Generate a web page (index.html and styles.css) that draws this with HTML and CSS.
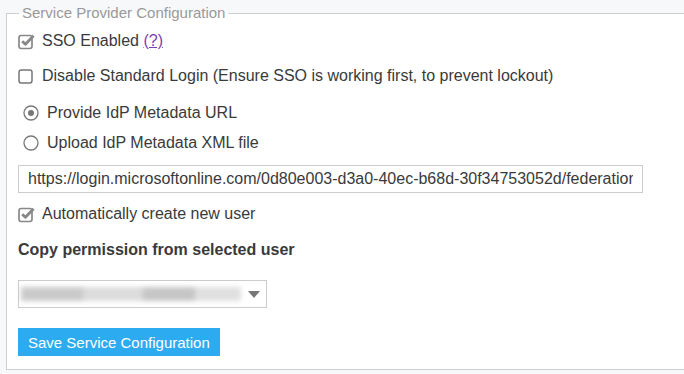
FILE: index.html
```html
<!DOCTYPE html>
<html lang="en">
<head>
    <meta charset="UTF-8">
    <title>Service Provider Configuration</title>
    <link rel="stylesheet" href="styles.css">
</head>
<body>
    <fieldset class="sp-config">
        <legend>Service Provider Configuration</legend>

        <label class="row row-sso">
            <svg class="check-icon" viewBox="0 0 17 17" width="17" height="17">
                <rect x="1" y="2.5" width="13" height="13" rx="2.2" fill="none" stroke="#888" stroke-width="1.7"/>
                <path d="M4.2 8.2 L7.4 11.3 L15.6 2.8" fill="none" stroke="#888" stroke-width="2.8" stroke-linejoin="round"/>
            </svg>
            <span>SSO Enabled <a href="#" class="help">(?)</a></span>
        </label>

        <label class="row row-disable">
            <svg class="check-icon" viewBox="0 0 17 17" width="17" height="17">
                <rect x="1" y="2" width="13" height="13" rx="2.2" fill="none" stroke="#777" stroke-width="1.5"/>
            </svg>
            <span>Disable Standard Login (Ensure SSO is working first, to prevent lockout)</span>
        </label>

        <label class="row radio row-url">
            <svg class="radio-icon" viewBox="0 0 16 16" width="16" height="16">
                <circle cx="8" cy="8" r="7" fill="none" stroke="#777" stroke-width="1.3"/>
                <circle cx="8" cy="8" r="3" fill="#777"/>
            </svg>
            <span>Provide IdP Metadata URL</span>
        </label>

        <label class="row radio row-upload">
            <svg class="radio-icon" viewBox="0 0 16 16" width="16" height="16">
                <circle cx="8" cy="8" r="7" fill="none" stroke="#777" stroke-width="1.3"/>
            </svg>
            <span>Upload IdP Metadata XML file</span>
        </label>

        <input class="url-box" type="text" readonly value="https://login.microsoftonline.com/0d80e003-d3a0-40ec-b68d-30f34753052d/federationmetadata/2007-06/federationmetadata.xml">

        <label class="row row-auto">
            <svg class="check-icon" viewBox="0 0 17 17" width="17" height="17">
                <rect x="1" y="2.5" width="13" height="13" rx="2.2" fill="none" stroke="#888" stroke-width="1.7"/>
                <path d="M4.2 8.2 L7.4 11.3 L15.6 2.8" fill="none" stroke="#888" stroke-width="2.8" stroke-linejoin="round"/>
            </svg>
            <span>Automatically create new user</span>
        </label>

        <div class="copy-label">Copy permission from selected user</div>

        <div class="user-select">
            <div class="blurred">
                <span class="blur-a"></span>
                <span class="blur-b"></span>
                <span class="blur-c"></span>
                <span class="blur-d"></span>
            </div>
            <span class="caret"></span>
        </div>

        <button class="save-btn">Save Service Configuration</button>
    </fieldset>
</body>
</html>
```

FILE: styles.css
```css
* {
    box-sizing: border-box;
}

html, body {
    margin: 0;
    padding: 0;
    overflow: hidden;
}

body {
    background: #f7f8fa;
    font-family: 'Liberation Sans', Arial, sans-serif;
    font-size: 16px;
    color: #3a3a3a;
    height: 374px;
}

.sp-config {
    margin: 4px 0 0 6px;
    width: 678px;
    padding: 9px 0 13px 11px;
    border: 1px solid #cfcfcf;
    border-right: none;
    background: #fff;
    min-width: 0;
}

.sp-config legend {
    padding: 0 3px;
    margin-left: 1px;
    color: #999;
    font-size: 15px;
    line-height: 18px;
    background: linear-gradient(to bottom, #f7f8fa 50%, #fff 50%);
}

.row {
    display: flex;
    align-items: center;
    height: 20px;
    line-height: 20px;
    gap: 7px;
}

.check-icon {
    flex: none;
}

.radio {
    padding-left: 5px;
    gap: 8px;
}

.row-disable { margin-top: 15px; }
.row-url { margin-top: 17px; }
.row-upload { margin-top: 10px; }

.help {
    color: #7b3fb0;
    text-decoration: underline;
}

.url-box {
    display: block;
    margin-top: 12px;
    width: 625px;
    height: 28px;
    border: 1px solid #ccc;
    padding: 0 9px;
    font-family: 'Liberation Sans', Arial, sans-serif;
    font-size: 16px;
    color: #3a3a3a;
    outline: none;
}

.row-auto { margin-top: 11px; }

.copy-label {
    margin-top: 16px;
    height: 20px;
    line-height: 20px;
    font-weight: bold;
}

.user-select {
    margin-top: 20px;
    width: 249px;
    height: 28px;
    border: 1px solid #ccc;
    display: flex;
    align-items: center;
    padding: 0 6px 0 2px;
}

.blurred {
    display: flex;
    width: 220px;
    height: 14px;
    filter: blur(2.5px);
}

.blurred span {
    height: 14px;
}

.blur-a { width: 62px; background: #cacaca; }
.blur-b { width: 60px; background: #dcdcdc; }
.blur-c { width: 52px; background: #c6c6c6; }
.blur-d { width: 46px; background: #e0e0e0; }

.caret {
    margin-left: auto;
    width: 0;
    height: 0;
    border-left: 6px solid transparent;
    border-right: 6px solid transparent;
    border-top: 7px solid #777;
}

.save-btn {
    display: block;
    margin-top: 20px;
    height: 28px;
    padding: 0 10px;
    border: none;
    background: #2dabf0;
    color: #fff;
    font-family: 'Liberation Sans', Arial, sans-serif;
    font-size: 15px;
}
```
